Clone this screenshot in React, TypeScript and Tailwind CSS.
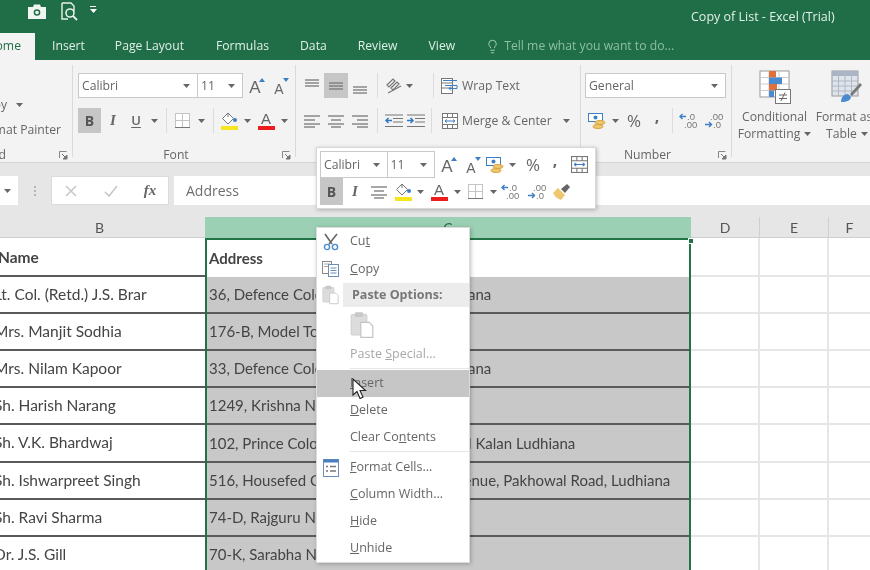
import { Lightbulb } from "lucide-react";
import type { ReactNode } from "react";

const uiFont = "font-['Open_Sans','Liberation_Sans',sans-serif]";
const cellFont = "font-['Lato','Open_Sans',sans-serif]";

const Cell = ({ className = "", children }: { className?: string; children?: ReactNode }) => (
	<div className={`flex shrink-0 items-center justify-center ${className}`}>{children}</div>
);

const Caret = ({ className = "" }: { className?: string }) => (
	<svg width="7" height="4" viewBox="0 0 7 4" className={className}>
		<path d="M0 0h7L3.5 4z" fill="#666" />
	</svg>
);

const VDiv = ({ className = "" }: { className?: string }) => (
	<Cell className={className}>
		<div className="h-[25px] w-px bg-[#dcdcdc]" />
	</Cell>
);

const Launcher = () => (
	<svg width="9" height="9" viewBox="0 0 9 9" className="shrink-0">
		<path d="M0.5 7V0.5H7.5" fill="none" stroke="#888" />
		<path d="M3 3l4 4M8 4v4H4z" fill="#777" stroke="#777" />
	</svg>
);

const Lines = ({ rows, w = 18, h = 14 }: { rows: [number, number, number][]; w?: number; h?: number }) => (
	<svg width={w} height={h} viewBox={`0 0 ${w} ${h}`}>
		{rows.map(([a, b, y]) => (
			<path key={`${a}-${y}`} d={`M${a} ${y}H${b}`} stroke="#777" strokeWidth="1.3" />
		))}
	</svg>
);

const GrowA = ({ small, down }: { small?: boolean; down?: boolean }) => (
	<div className="relative flex h-[20px] w-[20px] items-end justify-center">
		<span className={`font-['Liberation_Sans',sans-serif] leading-none text-[#666] ${small ? "text-[14px]" : "text-[17px]"}`}>A</span>
		<svg width="6" height="4" viewBox="0 0 6 4" className="absolute right-0 top-[2px]">
			<path d={down ? "M0 0h6L3 4z" : "M0 4h6L3 0z"} fill="#3d7fc4" />
		</svg>
	</div>
);

const FillColor = () => (
	<div className="flex flex-col items-center">
		<svg width="17" height="13" viewBox="0 0 17 13">
			<path d="M7 1L1.5 6.5 7 12l5.5-5.5z" fill="#fff" stroke="#777" />
			<path d="M7 1V5" stroke="#777" />
			<circle cx="14" cy="8" r="2" fill="#3d7fc4" />
		</svg>
		<div className="mt-px h-[4px] w-[17px] bg-[#f6e51f]" />
	</div>
);

const FontColor = () => (
	<div className="flex flex-col items-center">
		<span className="font-['Liberation_Sans',sans-serif] text-[15px] leading-[13px] text-[#666]">A</span>
		<div className="mt-px h-[4px] w-[17px] bg-[#ee1c1c]" />
	</div>
);

const Borders = () => (
	<svg width="15" height="15" viewBox="0 0 15 15">
		<rect x="0.5" y="0.5" width="14" height="14" fill="#fff" stroke="#c4c4c4" />
		<path d="M7.5 0v15M0 7.5h15" stroke="#c4c4c4" />
		<path d="M0 14.5h15" stroke="#777" />
	</svg>
);

const Currency = () => (
	<svg width="18" height="18" viewBox="0 0 18 18">
		<rect x="0.5" y="1.5" width="14" height="8" fill="#fff" stroke="#3d7fc4" />
		<circle cx="7.5" cy="5.5" r="2" fill="#3d7fc4" />
		<ellipse cx="12" cy="10.5" rx="5" ry="2" fill="#eec76f" stroke="#d8a33f" />
		<ellipse cx="10" cy="14.5" rx="5" ry="2" fill="#eec76f" stroke="#d8a33f" />
	</svg>
);

const DecimalUp = () => (
	<svg width="20" height="17" viewBox="0 0 20 17">
		<path d="M7 4.5H1M3.5 2L1 4.5 3.5 7" stroke="#3d7fc4" fill="none" strokeWidth="1.4" />
		<text x="8" y="8" fontSize="9.5" fill="#777" fontFamily="Liberation Sans">.0</text>
		<text x="5" y="16" fontSize="9.5" fill="#777" fontFamily="Liberation Sans">.00</text>
	</svg>
);

const DecimalDown = () => (
	<svg width="20" height="17" viewBox="0 0 20 17">
		<text x="6" y="8" fontSize="9.5" fill="#777" fontFamily="Liberation Sans">.00</text>
		<path d="M1 12.5h6M5 10l2.5 2.5L5 15" stroke="#3d7fc4" fill="none" strokeWidth="1.4" />
		<text x="9" y="16" fontSize="9.5" fill="#777" fontFamily="Liberation Sans">.0</text>
	</svg>
);

const MergeIcon = ({ w = 16, h = 16 }: { w?: number; h?: number }) => (
	<svg width={w} height={h} viewBox="0 0 16 16">
		<rect x="0.5" y="0.5" width="15" height="15" fill="#fff" stroke="#777" />
		<path d="M0 4.5h16M0 11.5h16M5.5 0v4M10.5 0v4M5.5 12v4M10.5 12v4" stroke="#777" />
		<path d="M3 8h10M3 8l2-1.6M3 8l2 1.6M13 8l-2-1.6M13 8l-2 1.6" stroke="#3d7fc4" fill="none" />
	</svg>
);

const Brush = () => (
	<svg width="19" height="19" viewBox="0 0 19 19">
		<path d="M1 11l5-5 7 7-4 5c-3-1-6-3-8-7z" fill="#eec76f" />
		<path d="M9 7l6-5 3 3-5 6z" fill="#666" />
	</svg>
);

const Orientation = () => (
	<svg width="18" height="18" viewBox="0 0 18 18">
		<path d="M2 8l6-6 2 2-6 6zM6 11l6-6 2 2-6 6z" fill="none" stroke="#777" strokeWidth="1.2" />
		<path d="M3 16L16 9" stroke="#777" strokeWidth="1.3" />
	</svg>
);

const Indent = ({ out }: { out?: boolean }) => (
	<svg width="18" height="14" viewBox="0 0 18 14">
		<path d="M0 1h18M8 4.5h10M8 8h10M0 12.5h18" stroke="#777" strokeWidth="1.2" />
		<path
			d={out ? "M7 6.5H1M3.5 4L1 6.5 3.5 9" : "M0 6.5h6M3.5 4L6 6.5 3.5 9"}
			stroke="#2f78c4"
			fill="none"
			strokeWidth="1.5"
		/>
	</svg>
);

const WrapIcon = () => (
	<svg width="18" height="18" viewBox="0 0 18 18">
		<rect x="0.5" y="1.5" width="11" height="15" fill="#fff" stroke="#777" />
		<path d="M0 6h11M0 11h11" stroke="#777" />
		<path d="M2 3.5h14M4 8.5h12v3H8M10 9.5l-2 2 2 2" stroke="#3d7fc4" fill="none" />
	</svg>
);

const CondFormatIcon = () => (
	<svg width="32" height="34" viewBox="0 0 32 34">
		<rect x="1" y="1" width="29" height="26" fill="#fff" stroke="#999" />
		<path d="M10 1v26M20 1v26M1 7.5h29M1 14h29M1 20.5h29" stroke="#ccc" />
		<rect x="10" y="1" width="7" height="6.5" fill="#e2703a" />
		<rect x="10" y="7.5" width="13" height="6.5" fill="#4a8bd0" />
		<rect x="10" y="14" width="8" height="6.5" fill="#e2703a" />
		<rect x="10" y="20.5" width="5" height="6.5" fill="#4a8bd0" />
		<rect x="16.5" y="19.5" width="15" height="14" fill="#fff" stroke="#777" />
		<path d="M20 25h8M20 28.5h8M26 22.5l-4 8.5" stroke="#666" />
	</svg>
);

const FormatTableIcon = () => (
	<svg width="32" height="33" viewBox="0 0 32 33">
		<rect x="1" y="1" width="26" height="25" fill="#dfe4ec" stroke="#999" />
		<rect x="1" y="1" width="26" height="5" fill="#aab4c4" />
		<path d="M7.5 1v25M14 1v25M20.5 1v25M1 11h26M1 16h26M1 21h26" stroke="#b0b8c4" />
		<path d="M10 32c0-5 3-8 7-8l3 3c0 3-4 5-10 5z" fill="#4a8bd0" />
		<path d="M19 24l10-11 2 2-10 11z" fill="#777" />
	</svg>
);

const Camera = () => (
	<svg width="18" height="15" viewBox="0 0 18 15">
		<path d="M0 3h5l1-2.5h6L13 3h5v12H0z" fill="#f0f5f2" />
		<circle cx="9" cy="8.5" r="3.3" fill="#1f6e47" />
		<circle cx="9" cy="8.5" r="1.8" fill="#f0f5f2" />
	</svg>
);

const PrintPreview = () => (
	<svg width="17" height="19" viewBox="0 0 17 19">
		<path d="M1 1h9l3 3v5M7 17H1V1" fill="none" stroke="#e8f1ec" strokeWidth="1.4" />
		<circle cx="9" cy="11" r="4" fill="none" stroke="#e8f1ec" strokeWidth="1.6" />
		<path d="M12 14l4 4" stroke="#e8f1ec" strokeWidth="1.8" />
	</svg>
);

const TitleBar = () => (
	<div className="flex h-[33px] items-center text-[#e4f0ea]">
		<Cell className="ml-[28px] w-[18px] pb-[10px]">
			<Camera />
		</Cell>
		<Cell className="ml-[14px] w-[18px] pb-[11px]">
			<PrintPreview />
		</Cell>
		<Cell className="ml-[10px] w-[10px] flex-col gap-[2px] pb-[14px]">
			<div className="h-px w-[6px] bg-white" />
			<svg width="7" height="4" viewBox="0 0 7 4">
				<path d="M0 0h7L3.5 4z" fill="#fff" />
			</svg>
		</Cell>
		<span className={`ml-[593px] whitespace-nowrap pt-[1px] text-[12.5px] ${uiFont}`}>Copy of List - Excel (Trial)</span>
	</div>
);

const tabs = [
	{ label: "Insert", cls: "ml-[17px]" },
	{ label: "Page Layout", cls: "ml-[30px]" },
	{ label: "Formulas", cls: "ml-[32px]" },
	{ label: "Data", cls: "ml-[31px]" },
	{ label: "Review", cls: "ml-[31px]" },
	{ label: "View", cls: "ml-[31px]" },
];

const TabBar = () => (
	<div className={`flex h-[27px] items-center text-[12.2px] text-[#e0eee7] ${uiFont}`}>
		<div className="flex h-full w-[35px] items-center justify-end overflow-hidden bg-[#f3f3f3] pr-[14px] text-[#1f6e47]">
			<span className="whitespace-nowrap">Home</span>
		</div>
		{tabs.map((t) => (
			<span key={t.label} className={`${t.cls} whitespace-nowrap`}>
				{t.label}
			</span>
		))}
		<Lightbulb size={15} strokeWidth={1.3} className="ml-[30px] text-[#bfdccc]" />
		<span className="ml-[4px] whitespace-nowrap text-[#8dbfa5]">Tell me what you want to do...</span>
	</div>
);

const Group = ({ className = "", label, launcher, children }: { className?: string; label?: ReactNode; launcher?: boolean; children: ReactNode }) => (
	<div className={`relative my-[5px] flex shrink-0 flex-col border-r border-[#dadada] pt-[8px] ${className}`}>
		{children}
		<div className="mt-[14px] flex h-[16px] shrink-0 items-center pr-[4px] text-[12.2px] text-[#666]">
			<div className="min-w-0 flex-1 whitespace-nowrap text-center">{label}</div>
			{launcher && <Launcher />}
		</div>
	</div>
);

const Combo = ({ className = "", text }: { className?: string; text: string }) => (
	<div className={`flex h-[25px] items-center justify-between border border-[#c9c9c9] bg-white pl-[3px] pr-[7px] text-[12.2px] text-[#666] ${className}`}>
		<span className="pt-[2px]">{text}</span>
		<Caret />
	</div>
);

const Ribbon = () => (
	<div className={`flex h-[103px] overflow-hidden border-b border-[#d4d4d4] bg-[#f3f3f3] ${uiFont}`}>
		<Group
			className="w-[73px]"
			label={
				<div className="flex justify-end pr-[53px]">
					<span>Clipboard</span>
				</div>
			}
			launcher
		>
			<div className="h-[60px] shrink-0" />
			<div className="absolute right-[6px] top-[31px] flex flex-col items-end gap-[7px] whitespace-nowrap text-[12.2px] text-[#666]">
				<div className="mr-[43px] flex items-center gap-[9px]">
					<span>Copy</span>
					<Caret />
				</div>
				<span className="mr-[5px]">Format Painter</span>
			</div>
		</Group>
		<Group className="w-[223px] pl-[5px]" label={<span className="mr-[8px] inline-block">Font</span>} launcher>
			<div className="flex h-[25px]">
				<Combo className="w-[120px]" text="Calibri" />
				<Combo className="-ml-px w-[46px]" text="11" />
				<Cell className="w-[24px]">
					<GrowA />
				</Cell>
				<Cell className="w-[24px]">
					<GrowA small down />
				</Cell>
			</div>
			<div className="mt-[10px] flex h-[25px]">
				<Cell className="w-[23px] bg-[#c6c6c6] text-[14px] font-bold text-[#555]">B</Cell>
				<Cell className="w-[24px] font-['Liberation_Serif',serif] text-[15px] font-semibold italic text-[#666]">I</Cell>
				<Cell className="w-[22px] text-[13px] font-semibold text-[#666] underline underline-offset-2">U</Cell>
				<Cell className="w-[14px]">
					<Caret />
				</Cell>
				<VDiv className="w-[10px]" />
				<Cell className="w-[22px]">
					<Borders />
				</Cell>
				<Cell className="w-[16px]">
					<Caret />
				</Cell>
				<VDiv className="w-[8px]" />
				<Cell className="w-[24px]">
					<FillColor />
				</Cell>
				<Cell className="w-[12px]">
					<Caret />
				</Cell>
				<Cell className="w-[26px]">
					<FontColor />
				</Cell>
				<Cell className="w-[10px]">
					<Caret />
				</Cell>
			</div>
		</Group>
		<Group className="w-[285px] pl-[4px]">
			<div className="flex h-[25px] items-center">
				<Cell className="w-[24px] pb-[6px]">
					<Lines rows={[[1, 15, 2], [1, 15, 5], [1, 15, 8]]} w={16} h={10} />
				</Cell>
				<Cell className="h-full w-[24px] bg-[#c6c6c6]">
					<Lines rows={[[1, 15, 2], [1, 15, 5], [1, 15, 8]]} w={16} h={10} />
				</Cell>
				<Cell className="w-[24px] pt-[8px]">
					<Lines rows={[[1, 15, 2], [1, 15, 5], [1, 15, 8]]} w={16} h={10} />
				</Cell>
				<VDiv className="w-[10px]" />
				<Cell className="w-[23px]">
					<Orientation />
				</Cell>
				<Cell className="w-[8px]">
					<Caret />
				</Cell>
				<VDiv className="w-[41px]" />
				<Cell className="-ml-[13px] w-[18px]">
					<WrapIcon />
				</Cell>
				<span className="ml-[3px] whitespace-nowrap pt-[2px] text-[12.2px] text-[#666]">Wrap Text</span>
			</div>
			<div className="mt-[10px] flex h-[25px] items-center">
				<Cell className="w-[24px]">
					<Lines rows={[[1, 17, 2], [1, 12, 6], [1, 17, 10], [1, 12, 13]]} />
				</Cell>
				<Cell className="w-[24px]">
					<Lines rows={[[1, 17, 2], [4, 14, 6], [1, 17, 10], [4, 14, 13]]} />
				</Cell>
				<Cell className="w-[24px]">
					<Lines rows={[[1, 17, 2], [6, 17, 6], [1, 17, 10], [6, 17, 13]]} />
				</Cell>
				<VDiv className="w-[10px]" />
				<Cell className="w-[22px] pl-[1px]">
					<Indent out />
				</Cell>
				<Cell className="w-[24px]">
					<Indent />
				</Cell>
				<VDiv className="w-[6px]" />
				<Cell className="ml-[7px] w-[18px]">
					<MergeIcon />
				</Cell>
				<span className="ml-[3px] whitespace-nowrap pt-[2px] text-[12.2px] text-[#666]">Merge &amp; Center</span>
				<Caret className="ml-[11px]" />
			</div>
		</Group>
		<Group className="w-[151px] pl-[4px]" label={<span className="mr-[8px] inline-block">Number</span>} launcher>
			<div className="flex h-[25px]">
				<Combo className="w-[141px]" text="General" />
			</div>
			<div className="mt-[10px] flex h-[25px] items-center">
				<Cell className="w-[24px]">
					<Currency />
				</Cell>
				<Cell className="w-[12px]">
					<Caret />
				</Cell>
				<Cell className="w-[26px] text-[17px] text-[#666]">%</Cell>
				<Cell className="w-[20px] pb-[10px] text-[16px] font-bold text-[#666]">,</Cell>
				<VDiv className="w-[10px]" />
				<Cell className="w-[24px]">
					<DecimalUp />
				</Cell>
				<Cell className="w-[26px]">
					<DecimalDown />
				</Cell>
			</div>
		</Group>
		<div className="my-[5px] flex text-[12.2px] leading-[17px] text-[#666]">
			<div className="flex w-[85px] flex-col items-center pt-[5px]">
				<CondFormatIcon />
				<span className="mt-[4px] whitespace-nowrap">Conditional</span>
				<span className="flex items-center gap-1 whitespace-nowrap">
					Formatting
					<Caret />
				</span>
			</div>
			<div className="flex w-[60px] flex-col items-center pt-[5px]">
				<FormatTableIcon />
				<span className="mr-[6px] mt-[5px] whitespace-nowrap">Format as</span>
				<span className="flex items-center gap-1 whitespace-nowrap">
					Table
					<Caret />
				</span>
			</div>
		</div>
	</div>
);

const FormulaBar = () => (
	<div className={`flex h-[54px] items-start bg-[#e6e6e6] pt-[13px] ${uiFont}`}>
		<div className="flex h-[29px] w-[18px] items-center justify-end bg-white pr-[7px]">
			<Caret />
		</div>
		<div className="flex h-[29px] w-[33px] items-center justify-center">
			<div className="flex flex-col gap-[2px]">
				<div className="h-[2px] w-[2px] bg-[#b5b5b5]" />
				<div className="h-[2px] w-[2px] bg-[#b5b5b5]" />
				<div className="h-[2px] w-[2px] bg-[#b5b5b5]" />
			</div>
		</div>
		<div className="flex h-[29px] w-[118px] items-center border border-[#dcdcdc] bg-white">
			<Cell className="ml-[8px] w-[22px] text-[#c8c8c8]">
				<svg width="12" height="12" viewBox="0 0 12 12">
					<path d="M1 1l10 10M11 1L1 11" stroke="#c8c8c8" strokeWidth="1.6" />
				</svg>
			</Cell>
			<Cell className="ml-[18px] w-[22px]">
				<svg width="14" height="12" viewBox="0 0 14 12">
					<path d="M1 7l4 4L13 1" fill="none" stroke="#c8c8c8" strokeWidth="1.6" />
				</svg>
			</Cell>
			<Cell className="ml-[17px] w-[22px] font-['Liberation_Serif',serif] text-[15px] font-semibold italic text-[#666]">fx</Cell>
		</div>
		<div className="ml-[5px] flex h-[29px] flex-1 items-center bg-white pl-[12px] text-[14px] text-[#6e6e6e]">Address</div>
	</div>
);

const rows = [
	{ name: "Lt. Col. (Retd.) J.S. Brar", address: "36, Defence Colony, Rajan Nagar, Ludhiana", tall: false },
	{ name: "Mrs. Manjit Sodhia", address: "176-B, Model Town", tall: false },
	{ name: "Mrs. Nilam Kapoor", address: "33, Defence Colony, Rajan Nagar, Ludhiana", tall: false },
	{ name: "Sh. Harish Narang", address: "1249, Krishna Nagar", tall: false },
	{ name: "Sh. V.K. Bhardwaj", address: "102, Prince Colony, Street 4A, Haibowal Kalan Ludhiana", tall: true },
	{ name: "Sh. Ishwarpreet Singh", address: "516, Housefed Complex, Greenland Avenue, Pakhowal Road, Ludhiana", tall: false },
	{ name: "Sh. Ravi Sharma", address: "74-D, Rajguru Nagar", tall: false },
	{ name: "Dr. J.S. Gill", address: "70-K, Sarabha Nagar", tall: false },
];

const EmptyCells = () => (
	<>
		<div className="w-[69px] border-b-2 border-r-2 border-[#e6e6e6]" />
		<div className="w-[69px] border-b-2 border-r-2 border-[#e6e6e6]" />
		<div className="flex-1 border-b-2 border-[#e6e6e6]" />
	</>
);

const Sheet = () => (
	<div className={`relative text-[#444] ${cellFont}`}>
		<div className="flex h-[21px] bg-[#e6e6e6] text-[14px] text-[#555]">
			<Cell className="w-[205px] border-b border-[#cfcfcf] pr-[6px]">B</Cell>
			<Cell className="w-[486px] bg-[#9bd0b4] text-[#2c6b49]">C</Cell>
			<Cell className="w-[69px] border-b border-r border-[#cfcfcf]">D</Cell>
			<Cell className="w-[69px] border-b border-r border-[#cfcfcf]">E</Cell>
			<Cell className="flex-1 border-b border-[#cfcfcf]">F</Cell>
		</div>
		<div className="flex h-[39px]">
			<div className="flex w-[205px] items-center whitespace-nowrap border-b-2 border-[#5a5a5a] pt-[3px] text-[15.5px] font-bold">
				<span className="-ml-[2px]">Name</span>
			</div>
			<div className="flex w-[486px] items-center border-x-2 border-t-2 border-x-[#217346] border-t-[#217346] bg-white pl-[2px] text-[15px] font-bold">Address</div>
			<EmptyCells />
		</div>
		{rows.map((row) => (
			<div key={row.name} className={`flex ${row.tall ? "h-[38px]" : "h-[37px]"}`}>
				<div className="flex w-[205px] items-center overflow-hidden whitespace-nowrap border-b-2 border-[#5a5a5a] text-[15.5px]">
					<span className="-ml-[6px]">{row.name}</span>
				</div>
				<div className="w-[486px] border-x-2 border-[#217346]">
					<div className="flex h-full items-center overflow-hidden whitespace-nowrap border-b-2 border-[#5a5a5a] bg-[#c8c8c8] pl-[2px] text-[15px]">{row.address}</div>
				</div>
				<EmptyCells />
			</div>
		))}
		<div className="absolute left-[688px] top-[21px] h-[6px] w-[6px] border border-white bg-[#217346]" />
	</div>
);

const MiniToolbar = () => (
	<div className={`absolute left-[316px] top-[147px] flex h-[62px] w-[280px] flex-col border border-[#d8d8d8] bg-white pl-[3px] pt-[3px] shadow-[1px_1px_4px_rgba(0,0,0,0.25)] ${uiFont}`}>
		<div className="flex h-[27px] items-center">
			<Combo className="h-[27px] w-[70px]" text="Calibri" />
			<Combo className="-ml-px h-[27px] w-[50px]" text="11" />
			<Cell className="w-[24px]">
				<GrowA />
			</Cell>
			<Cell className="w-[24px]">
				<GrowA small down />
			</Cell>
			<Cell className="w-[24px]">
				<Currency />
			</Cell>
			<Cell className="w-[10px]">
				<Caret />
			</Cell>
			<Cell className="w-[30px] pl-[2px] text-[17px] text-[#666]">%</Cell>
			<Cell className="w-[16px] pb-[10px] text-[16px] font-bold text-[#666]">,</Cell>
			<Cell className="w-[32px]">
				<MergeIcon w={17} h={17} />
			</Cell>
		</div>
		<div className="flex h-[27px] items-center">
			<Cell className="h-full w-[23px] bg-[#c6c6c6] text-[14px] font-bold text-[#555]">B</Cell>
			<Cell className="w-[24px] font-['Liberation_Serif',serif] text-[15px] font-semibold italic text-[#666]">I</Cell>
			<Cell className="w-[24px]">
				<Lines rows={[[1, 17, 2], [4, 14, 6], [1, 17, 10], [4, 14, 13]]} />
			</Cell>
			<Cell className="w-[24px]">
				<FillColor />
			</Cell>
			<Cell className="w-[10px]">
				<Caret />
			</Cell>
			<Cell className="w-[28px]">
				<FontColor />
			</Cell>
			<Cell className="w-[8px]">
				<Caret />
			</Cell>
			<Cell className="w-[28px]">
				<Borders />
			</Cell>
			<Cell className="w-[8px]">
				<Caret />
			</Cell>
			<Cell className="w-[28px]">
				<DecimalUp />
			</Cell>
			<Cell className="w-[24px]">
				<DecimalDown />
			</Cell>
			<Cell className="w-[24px]">
				<Brush />
			</Cell>
		</div>
	</div>
);

const Scissors = () => (
	<svg width="16" height="18" viewBox="0 0 16 18">
		<path d="M2 1l7 10M14 1L6 11" stroke="#666" strokeWidth="1.6" />
		<circle cx="4" cy="14" r="2.6" fill="none" stroke="#4a8bd0" strokeWidth="1.4" />
		<circle cx="12" cy="14" r="2.6" fill="none" stroke="#4a8bd0" strokeWidth="1.4" />
	</svg>
);

const CopyIcon = () => (
	<svg width="17" height="16" viewBox="0 0 17 16">
		<rect x="0.5" y="0.5" width="9" height="12" fill="#fff" stroke="#888" />
		<path d="M2 3h6M2 5.5h6" stroke="#aaa" />
		<rect x="6.5" y="3.5" width="10" height="12" fill="#fff" stroke="#6a8fb5" />
		<path d="M8.5 7h6M8.5 9.5h6M8.5 12h6" stroke="#6a8fb5" />
	</svg>
);

const PasteIcon = ({ size = 17 }: { size?: number }) => (
	<svg width={size} height={size * 1.15} viewBox="0 0 20 23">
		<rect x="1" y="3" width="13" height="17" rx="1" fill="#dcdcdc" stroke="#d0d0d0" />
		<rect x="4" y="1" width="7" height="4" rx="1" fill="#c8c8c8" />
		<path d="M9 9.5h7l3 3v9.5H9z" fill="#fff" stroke="#c4c4c4" />
	</svg>
);

const FormatCellsIcon = () => (
	<svg width="16" height="18" viewBox="0 0 16 18">
		<rect x="0.5" y="0.5" width="15" height="17" fill="#fff" stroke="#6a8fb5" />
		<rect x="0.5" y="0.5" width="15" height="3" fill="#4a7fc0" />
		<path d="M3 7.5h2M7 7.5h6M3 12h2M7 12h6" stroke="#777" strokeWidth="1.4" />
	</svg>
);

const MenuItem = ({ children, icon, muted, className = "h-[27px]" }: { children: ReactNode; icon?: ReactNode; muted?: boolean; className?: string }) => (
	<div className={`flex items-center ${muted ? "text-[#a8a8a8]" : "text-[#666]"} ${className}`}>
		<Cell className="w-[27px]">{icon}</Cell>
		<span className="ml-[6px] whitespace-nowrap">{children}</span>
	</div>
);

const ContextMenu = () => (
	<div className={`absolute left-[316px] top-[227px] flex h-[336px] w-[154px] flex-col border border-[#dcdcdc] bg-white text-[12.5px] shadow-[1px_1px_4px_rgba(0,0,0,0.25)] ${uiFont}`}>
		<MenuItem icon={<Scissors />}>
			Cu<u>t</u>
		</MenuItem>
		<MenuItem className="h-[28px]" icon={<CopyIcon />}>
			<u>C</u>opy
		</MenuItem>
		<div className="flex h-[24px] items-center">
			<Cell className="w-[26px]">
				<PasteIcon />
			</Cell>
			<div className="flex h-full flex-1 items-center bg-[#ececec] pl-[9px] font-bold text-[#777]">Paste Options:</div>
		</div>
		<div className="flex h-[36px] items-center pl-[33px]">
			<PasteIcon size={24} />
		</div>
		<MenuItem muted className="h-[23px]">
			Paste <u>S</u>pecial...
		</MenuItem>
		<div className="ml-[33px] mt-[2px] h-px bg-[#e6e6e6]" />
		<div className="mt-[1px] flex h-[27px] items-center bg-[#c6c6c6] text-[#666]">
			<span className="ml-[33px]">
				<u>I</u>nsert
			</span>
		</div>
		<MenuItem>
			<u>D</u>elete
		</MenuItem>
		<MenuItem>
			Clear Co<u>n</u>tents
		</MenuItem>
		<div className="mb-[2px] ml-[33px] h-px bg-[#e6e6e6]" />
		<MenuItem icon={<FormatCellsIcon />}>
			<u>F</u>ormat Cells...
		</MenuItem>
		<MenuItem>
			<u>C</u>olumn Width...
		</MenuItem>
		<MenuItem>
			<u>H</u>ide
		</MenuItem>
		<MenuItem>
			<u>U</u>nhide
		</MenuItem>
	</div>
);

const Pointer = () => (
	<svg width="15" height="22" viewBox="0 0 15 22" className="absolute left-[352px] top-[378px]">
		<path d="M1 1v16l4-3.5 3 7 3-1.3-3-6.7h5.5z" fill="#fff" stroke="#222" strokeWidth="1.1" />
	</svg>
);

export default function App() {
	return (
		<div className="relative h-[570px] w-[870px] overflow-hidden bg-white blur-[0.5px]">
			<div className="bg-[#1f6e47]">
				<TitleBar />
				<TabBar />
			</div>
			<Ribbon />
			<FormulaBar />
			<Sheet />
			<MiniToolbar />
			<ContextMenu />
			<Pointer />
		</div>
	);
}
